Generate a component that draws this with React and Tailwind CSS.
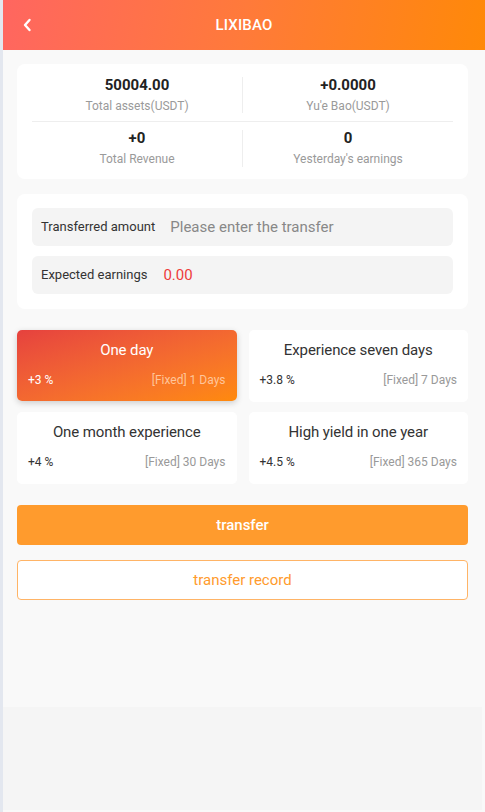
import React from "react";

const products = [
  { title: "One day", rate: "+3 %", term: "[Fixed] 1 Days", active: true },
  { title: "Experience seven days", rate: "+3.8 %", term: "[Fixed] 7 Days" },
  { title: "One month experience", rate: "+4 %", term: "[Fixed] 30 Days" },
  { title: "High yield in one year", rate: "+4.5 %", term: "[Fixed] 365 Days" },
];

function Stat({ value, label }) {
  return (
    <div className="flex-1 flex flex-col items-center">
      <div className="text-[15px] font-bold text-[#222] leading-[20px]">{value}</div>
      <div className="text-[12px] text-[#9a9a9a] leading-[18px] mt-[2px]">{label}</div>
    </div>
  );
}

export default function App() {
  return (
    <div className="w-[485px] h-[812px] flex bg-[#fafafa]" style={{ fontFamily: "Roboto, 'Noto Sans', sans-serif" }}>
      <div className="w-[3px] bg-[#e3e7ef] shrink-0" />
      <div className="flex-1 flex flex-col">
        <div className="h-[50px] shrink-0 relative flex items-center justify-center" style={{ backgroundImage: "linear-gradient(100deg, #ff6660 0%, #ff7a3a 50%, #ff8908 100%)" }}>
          <svg className="absolute left-[19px] top-[18px]" width="10" height="14" viewBox="0 0 10 14" fill="none">
            <path d="M7.5 2 L3 7 L7.5 12" stroke="white" strokeWidth="2.4" strokeLinecap="round" strokeLinejoin="round" />
          </svg>
          <div className="text-white text-[15px] font-medium tracking-[0.2px]">LIXIBAO</div>
        </div>
        <div className="flex-1 flex flex-col bg-[#f9f9f9]">
          <div className="pl-[14px] pr-[17px] pt-[14px] pb-[18px] flex flex-col">
            <div className="bg-white rounded-[8px] px-[15px] pt-[11px] pb-[11px]">
              <div className="flex items-center">
                <Stat value="50004.00" label="Total assets(USDT)" />
                <div className="w-px h-[36px] bg-[#eeeeee]" />
                <Stat value="+0.0000" label="Yu'e Bao(USDT)" />
              </div>
              <div className="h-px bg-[#eeeeee] my-[6px]" />
              <div className="flex items-center">
                <Stat value="+0" label="Total Revenue" />
                <div className="w-px h-[37px] bg-[#eeeeee]" />
                <Stat value="0" label="Yesterday's earnings" />
              </div>
            </div>

            <div className="bg-white rounded-[8px] px-[15px] pt-[14px] pb-[15px] mt-[15px] flex flex-col gap-[10px]">
              <div className="h-[38px] bg-[#f4f4f4] rounded-[6px] flex items-center px-[9px]">
                <span className="text-[13px] text-[#333]">Transferred amount</span>
                <span className="text-[15px] text-[#888] ml-[15px]">Please enter the transfer</span>
              </div>
              <div className="h-[38px] bg-[#f4f4f4] rounded-[6px] flex items-center px-[9px]">
                <span className="text-[13px] text-[#333]">Expected earnings</span>
                <span className="text-[15px] text-[#ee3b3b] ml-[16px]">0.00</span>
              </div>
            </div>

            <div className="grid grid-cols-2 gap-x-[12px] gap-y-[10px] mt-[21px]">
              {products.map((p) => (
                <div
                  key={p.title}
                  className={
                    p.active
                      ? "self-start h-[71px] rounded-[5px] px-[11px] pt-[10px] flex flex-col shadow-[0_2px_6px_rgba(0,0,0,0.18)] bg-gradient-to-br from-[#e6413e] to-[#ff8a0a]"
                      : "h-[72px] rounded-[5px] px-[11px] pt-[10px] flex flex-col bg-white"
                  }
                >
                  <div className={"text-center text-[15px] tracking-[-0.1px] leading-[20px] " + (p.active ? "text-white" : "text-[#333]")}>{p.title}</div>
                  <div className="flex justify-between items-center mt-[11px] text-[12px]">
                    <span className={p.active ? "text-white" : "text-[#333]"}>{p.rate}</span>
                    <span className={p.active ? "text-[#ffc59a]" : "text-[#999]"}>{p.term}</span>
                  </div>
                </div>
              ))}
            </div>

            <button className="mt-[21px] h-[40px] rounded-[4px] bg-[#ff9b2d] text-white text-[15px] font-medium">transfer</button>
            <button className="mt-[15px] h-[40px] rounded-[4px] bg-white border border-[#ffb466] text-[#ff9b2d] text-[15px]">transfer record</button>
          </div>
          <div className="flex-1" />
          <div className="h-[103px] bg-[#f5f5f5] mr-[3px]" />
          <div className="h-[2px]" />
        </div>
      </div>
    </div>
  );
}
